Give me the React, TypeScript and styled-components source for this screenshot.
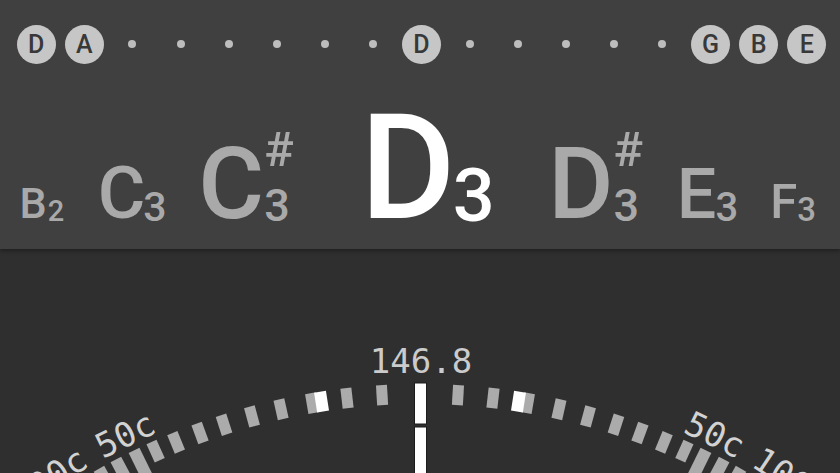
import React from "react";
import styled, { createGlobalStyle } from "styled-components";

const GlobalStyle = createGlobalStyle`
  html, body {
    margin: 0;
    padding: 0;
    background: #2f2f2f;
  }
  body {
    font-family: Roboto, "Liberation Sans", sans-serif;
  }
`;

const Screen = styled.div`
  width: 840px;
  height: 473px;
  overflow: hidden;
  display: flex;
  flex-direction: column;
  background: #2f2f2f;
`;

const TopPanel = styled.div`
  height: 249px;
  flex: none;
  background: #404040;
  box-shadow: 0 2px 4px rgba(0, 0, 0, 0.35);
  position: relative;
  z-index: 1;
`;

const StringRow = styled.div`
  height: 88px;
  display: grid;
  grid-template-columns: repeat(17, 1fr);
  align-items: center;
  justify-items: center;
  padding: 0 9px 0 12px;
`;

const StringBadge = styled.div`
  width: 39px;
  height: 39px;
  border-radius: 50%;
  background: #c6c6c6;
  color: #383838;
  font-size: 25px;
  font-weight: 500;
  display: flex;
  align-items: center;
  justify-content: center;
`;

const Fret = styled.div`
  width: 8px;
  height: 8px;
  border-radius: 50%;
  background: #bdbdbd;
`;

const NoteRow = styled.div`
  display: flex;
  align-items: baseline;
  padding-top: 8px;
`;

const Note = styled.div<{ $ml: number; $active?: boolean }>`
  margin-left: ${(p) => p.$ml}px;
  color: ${(p) => (p.$active ? "#ffffff" : "#a9a9a9")};
  font-weight: 500;
  white-space: nowrap;
  line-height: 1;
`;

const Letter = styled.span<{ $size: number }>`
  font-size: ${(p) => p.$size}px;
  line-height: 1;
`;

const Octave = styled.span<{ $shift: number }>`
  display: inline-block;
  vertical-align: -3px;
  margin-left: ${(p) => p.$shift}px;
`;

const Sharp = styled.span<{ $size: number }>`
  display: block;
  font-size: ${(p) => p.$size}px;
  line-height: 1;
  margin-bottom: 9px;
`;

const Digit = styled.span<{ $size: number }>`
  display: block;
  font-size: ${(p) => p.$size}px;
  line-height: 1;
`;

const DialPanel = styled.div`
  flex: 1;
  background: #2f2f2f;
`;

const DialSvg = styled.svg`
  display: block;
`;

const strings: (string | null)[] = [
  "D", "A", null, null, null, null, null, null, "D",
  null, null, null, null, null, "G", "B", "E",
];

type NoteDef = {
  name: string;
  size: number;
  octave: string;
  octSize: number;
  sharp?: boolean;
  ml: number;
  shift?: number;
  active?: boolean;
};

const notes: NoteDef[] = [
  { name: "B", size: 43, octave: "2", octSize: 29, ml: 19.6, shift: 1 },
  { name: "C", size: 73, octave: "3", octSize: 41, ml: 33.4, shift: -2 },
  { name: "C", size: 101, octave: "3", octSize: 45, sharp: true, ml: 31.7 },
  { name: "D", size: 146, octave: "3", octSize: 74, ml: 66.5, shift: -3, active: true },
  { name: "D", size: 100, octave: "3", octSize: 45, sharp: true, ml: 53.5 },
  { name: "E", size: 70, octave: "3", octSize: 40, ml: 33.8, shift: -1 },
  { name: "F", size: 49, octave: "3", octSize: 33, ml: 32 },
];

const CX = 420;
const CY = 785;
const OUTER = 650;

const smallTicks = [3.4, 6.55, 9.7, 12.54, 15.22, 17.83, 20.1, 22.4, 24.4];
const bigTicks = [26.1, 27.9, 29.6, 31.3, 33.0];

function Tick({ angle, w, len, color }: { angle: number; w: number; len: number; color: string }) {
  return (
    <rect
      x={CX - w / 2}
      y={CY - OUTER}
      width={w}
      height={len}
      fill={color}
      transform={`rotate(${angle} ${CX} ${CY})`}
    />
  );
}

function Label({ angle, text }: { angle: number; text: string }) {
  return (
    <text
      x={CX}
      y={CY - 656}
      textAnchor="middle"
      fill="#d2d2d2"
      fontSize={34}
      fontFamily='"DejaVu Sans Mono", "Liberation Mono", monospace'
      transform={`rotate(${angle} ${CX} ${CY})`}
    >
      {text}
    </text>
  );
}

function Dial() {
  const sides = [-1, 1];
  return (
    <DialSvg width={840} height={224} viewBox="0 0 840 224">
      {sides.map((s) => (
        <g key={s}>
          {smallTicks.map((a) => (
            <Tick key={a} angle={s * a} w={11} len={20} color="#ababab" />
          ))}
          <Tick angle={s * 8.85} w={12} len={20} color="#ffffff" />
          {bigTicks.map((a) => (
            <Tick key={a} angle={s * a} w={12} len={45} color="#ababab" />
          ))}
          <Label angle={s * 26.2} text="50c" />
          <Label angle={s * 33.7} text="100c" />
        </g>
      ))}
      <text
        x={421}
        y={124}
        textAnchor="middle"
        fill="#cbcbcb"
        fontSize={34}
        fontFamily='"DejaVu Sans Mono", "Liberation Mono", monospace'
      >
        146.8
      </text>
      <rect x={414.5} y={134} width={12} height={41} fill="#ffffff" stroke="#1c1c1c" strokeWidth={1} />
      <rect x={414.5} y={178} width={12} height={60} fill="#ffffff" stroke="#1c1c1c" strokeWidth={1} />
    </DialSvg>
  );
}

export default function App() {
  return (
    <>
      <GlobalStyle />
      <Screen>
        <TopPanel>
          <StringRow>
            {strings.map((s, i) =>
              s ? <StringBadge key={i}>{s}</StringBadge> : <Fret key={i} />
            )}
          </StringRow>
          <NoteRow>
            {notes.map((n, i) => (
              <Note key={i} $ml={n.ml} $active={n.active}>
                <Letter $size={n.size}>{n.name}</Letter>
                <Octave $shift={n.shift ?? 0}>
                  {n.sharp && <Sharp $size={49}>#</Sharp>}
                  <Digit $size={n.octSize}>{n.octave}</Digit>
                </Octave>
              </Note>
            ))}
          </NoteRow>
        </TopPanel>
        <DialPanel>
          <Dial />
        </DialPanel>
      </Screen>
    </>
  );
}
